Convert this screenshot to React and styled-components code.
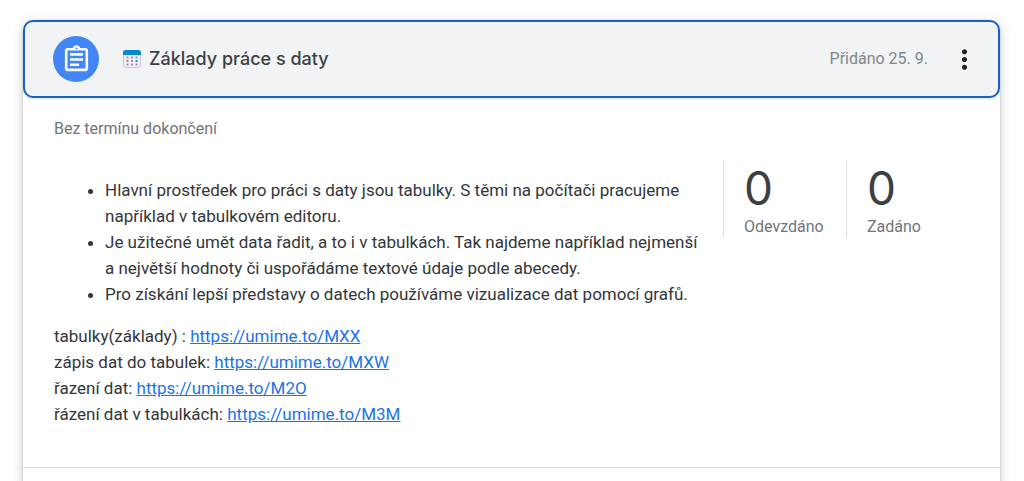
import React from "react";
import styled, { createGlobalStyle } from "styled-components";

const GlobalStyle = createGlobalStyle`
  *, *::before, *::after { box-sizing: border-box; }
  body {
    margin: 0;
    background: #fff;
    color: #333639;
    font-family: Roboto, "Liberation Sans", sans-serif;
    font-size: 17px;
    line-height: 26px;
  }
`;

const Page = styled.main`
  padding: 20px 24px 0 23px;
`;

const Card = styled.article`
  border-radius: 10px 10px 0 0;
  background: #fff;
  box-shadow: 0 1px 3px rgba(60, 64, 67, 0.3), 0 4px 10px 3px rgba(60, 64, 67, 0.15);
`;

const Header = styled.header`
  display: flex;
  align-items: center;
  height: 78px;
  padding: 0 14px 0 28px;
  border: 2px solid #1b61c5;
  border-radius: 10px;
  background: #f1f3f4;
  box-shadow: 0 2px 0 #e8f0fe;
`;

const Badge = styled.span`
  display: flex;
  align-items: center;
  justify-content: center;
  width: 46px;
  height: 46px;
  margin-right: 24px;
  border-radius: 50%;
  background: #4285f4;
`;

const Title = styled.h1`
  display: flex;
  flex: 1;
  align-items: center;
  gap: 8px;
  margin: 0;
  color: #3c4043;
  font-family: Inter, Roboto, sans-serif;
  font-size: 18px;
  font-weight: 500;
`;

const Added = styled.span`
  margin-right: 16px;
  color: #80868b;
  font-size: 16px;
`;

const MenuButton = styled.button`
  display: flex;
  align-items: center;
  justify-content: center;
  width: 40px;
  height: 40px;
  padding: 0;
  border: 0;
  border-radius: 50%;
  background: transparent;
  color: #202124;
`;

const Body = styled.section`
  padding: 18px 31px 40px;
  border-bottom: 1px solid #e0e0e0;
`;

const Footer = styled.footer`
  height: 14px;
`;

const DueDate = styled.p`
  margin: 0;
  color: #70757a;
  font-size: 16px;
`;

const Columns = styled.div`
  display: flex;
  align-items: flex-start;
  padding-top: 18px;
`;

const Description = styled.div`
  flex: 1;
  padding-right: 20px;
`;

const Points = styled.ul`
  margin: 17px 0 16px;
  padding-left: 51px;
`;

const Links = styled.p`
  margin: 0;
`;

const Link = styled.a`
  color: #1a73e8;
  text-decoration: underline;
`;

const Stats = styled.dl`
  display: flex;
  margin: 0;
`;

const Stat = styled.div`
  display: flex;
  flex-direction: column-reverse;
  width: 123px;
  height: 78px;
  padding-left: 20px;
  border-left: 1px solid #e0e0e0;
`;

const StatLabel = styled.dt`
  color: #70757a;
  font-size: 16px;
  line-height: 22px;
`;

const StatValue = styled.dd`
  margin: 0;
  color: #3c4043;
  font-family: Inter, Roboto, sans-serif;
  font-size: 46px;
  line-height: 56px;
`;

const points = [
  "Hlavní prostředek pro práci s daty jsou tabulky. S těmi na počítači pracujeme například v tabulkovém editoru.",
  "Je užitečné umět data řadit, a to i v tabulkách. Tak najdeme například nejmenší a\u00a0největší hodnoty či uspořádáme textové údaje podle abecedy.",
  "Pro získání lepší představy o datech používáme vizualizace dat pomocí grafů.",
];

const links = [
  ["tabulky(základy) :", "https://umime.to/MXX"],
  ["zápis dat do tabulek:", "https://umime.to/MXW"],
  ["řazení dat:", "https://umime.to/M2O"],
  ["řázení dat v tabulkách:", "https://umime.to/M3M"],
];

const stats = [
  ["Odevzdáno", 0],
  ["Zadáno", 0],
];

function AssignmentIcon() {
  return (
    <svg width="31" height="31" viewBox="0 0 24 24" fill="#fff" aria-hidden="true">
      <path d="M7 15h7v2H7zm0-4h10v2H7zm0-4h10v2H7z" />
      <path d="M19 3h-4.18C14.4 1.84 13.3 1 12 1c-1.3 0-2.4.84-2.82 2H5c-.14 0-.27.01-.4.04-.39.08-.74.28-1.01.55-.18.18-.33.4-.43.64-.1.23-.16.49-.16.77v14c0 .27.06.54.16.78s.25.45.43.64c.27.27.62.47 1.01.55.13.02.26.03.4.03h14c1.1 0 2-.9 2-2V5c0-1.1-.9-2-2-2zm-7-.25c.41 0 .75.34.75.75s-.34.75-.75.75-.75-.34-.75-.75.34-.75.75-.75zM19 19H5V5h14v14z" />
    </svg>
  );
}

function CalendarIcon() {
  return (
    <svg width="18" height="18" viewBox="0 0 18 18" aria-hidden="true">
      <rect x="0.5" y="0.5" width="17" height="17" rx="2.5" fill="#f3eef8" stroke="#cdc4d6" />
      <path d="M0 5V2.5A2.5 2.5 0 0 1 2.5 0h13A2.5 2.5 0 0 1 18 2.5V5z" fill="#0288d1" />
      {[6.5, 10, 13.5].map((y) =>
        [3.5, 8, 12.5].map((x) => (
          <rect
            key={`${x}-${y}`}
            x={x}
            y={y}
            width="2"
            height="2"
            fill={x === 12.5 && y === 10 ? "#0496e8" : "#9b8fa8"}
          />
        ))
      )}
    </svg>
  );
}

function MoreIcon() {
  return (
    <svg width="31" height="31" viewBox="0 0 24 24" fill="currentColor" aria-hidden="true">
      <path d="M12 8c1.1 0 2-.9 2-2s-.9-2-2-2-2 .9-2 2 .9 2 2 2zm0 2c-1.1 0-2 .9-2 2s.9 2 2 2 2-.9 2-2-.9-2-2-2zm0 6c-1.1 0-2 .9-2 2s.9 2 2 2 2-.9 2-2-.9-2-2-2z" />
    </svg>
  );
}

export default function App() {
  return (
    <>
      <GlobalStyle />
      <Page>
        <Card>
          <Header>
            <Badge>
              <AssignmentIcon />
            </Badge>
            <Title>
              <CalendarIcon />
              Základy práce s daty
            </Title>
            <Added>Přidáno 25. 9.</Added>
            <MenuButton type="button" aria-label="Další možnosti">
              <MoreIcon />
            </MenuButton>
          </Header>
          <Body>
            <DueDate>Bez termínu dokončení</DueDate>
            <Columns>
              <Description>
                <Points>
                  {points.map((text) => (
                    <li key={text}>{text}</li>
                  ))}
                </Points>
                <Links>
                  {links.map(([label, url], i) => (
                    <React.Fragment key={url}>
                      {i > 0 && <br />}
                      {label} <Link href={url}>{url}</Link>
                    </React.Fragment>
                  ))}
                </Links>
              </Description>
              <Stats>
                {stats.map(([label, value]) => (
                  <Stat key={label}>
                    <StatLabel>{label}</StatLabel>
                    <StatValue>{value}</StatValue>
                  </Stat>
                ))}
              </Stats>
            </Columns>
          </Body>
          <Footer />
        </Card>
      </Page>
    </>
  );
}
